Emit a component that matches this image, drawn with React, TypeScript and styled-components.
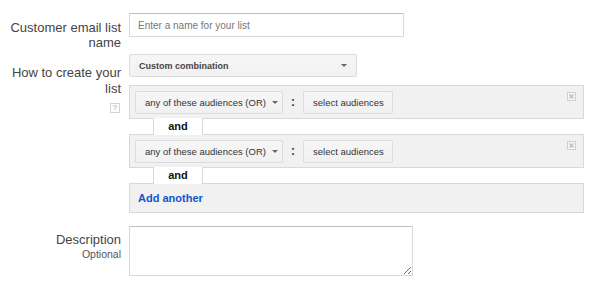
import React from "react";
import styled, { createGlobalStyle } from "styled-components";

const GlobalStyle = createGlobalStyle`
  body {
    margin: 0;
    background: #fff;
    font-family: Arial, "Liberation Sans", sans-serif;
  }
`;

const Page = styled.div`
  width: 600px;
  padding-top: 13px;
`;

const FormRow = styled.div<{ $gap?: number }>`
  display: grid;
  grid-template-columns: 121px 455px;
  column-gap: 8px;
  align-items: start;
  margin-top: ${(p) => p.$gap || 0}px;
`;

const Label = styled.div<{ $pad: number; $lh?: number }>`
  display: flex;
  flex-direction: column;
  align-items: flex-end;
  text-align: right;
  padding-top: ${(p) => p.$pad}px;
  font-size: 13px;
  line-height: ${(p) => p.$lh || 15}px;
  color: #444;
`;

const SubLabel = styled.div`
  margin-top: 1px;
  font-size: 10.5px;
  line-height: 13px;
  color: #555;
`;

const HelpIcon = styled.span`
  display: flex;
  align-items: center;
  justify-content: center;
  width: 8px;
  height: 8px;
  margin-top: 6px;
  margin-right: 1px;
  border: 1px solid #d4d4d4;
  font-size: 7px;
  line-height: 8px;
  color: #999;
`;

const Field = styled.div`
  display: flex;
  flex-direction: column;
  align-items: flex-start;
`;

const TextInput = styled.input`
  box-sizing: border-box;
  width: 275px;
  height: 24px;
  padding: 0 8px;
  border: 1px solid #d9d9d9;
  border-top-color: #c0c0c0;
  border-radius: 1px;
  font-family: Arial, "Liberation Sans", sans-serif;
  font-size: 10px;
  color: #333;
  outline: none;
  &::placeholder {
    color: #777;
  }
`;

const Button = styled.div<{ $w: number; $bold?: boolean }>`
  box-sizing: border-box;
  display: flex;
  align-items: center;
  justify-content: space-between;
  gap: 6px;
  width: ${(p) => p.$w}px;
  height: 23px;
  padding: 0 9px 0 9px;
  border: 1px solid #dcdcdc;
  border-radius: 2px;
  background: linear-gradient(#f6f6f6, #f1f1f1);
  font-size: ${(p) => (p.$bold ? 9 : 9.5)}px;
  font-weight: ${(p) => (p.$bold ? "bold" : "normal")};
  color: ${(p) => (p.$bold ? "#444" : "#333")};
  white-space: nowrap;
`;

const Caret = styled.span`
  width: 0;
  height: 0;
  border-left: 3px solid transparent;
  border-right: 3px solid transparent;
  border-top: 3px solid #666;
`;

const Groups = styled.div`
  width: 455px;
  margin-top: 8px;
  display: flex;
  flex-direction: column;
`;

const GroupBox = styled.div`
  position: relative;
  box-sizing: border-box;
  display: flex;
  align-items: center;
  height: 34px;
  padding: 0 5px;
  border: 1px solid #d9d9d9;
  background: #f1f1f1;
`;

const Colon = styled.span`
  width: 20px;
  text-align: center;
  font-size: 12px;
  font-weight: bold;
  color: #333;
`;

const CloseBox = styled.span`
  position: absolute;
  top: 6px;
  right: 7px;
  display: flex;
`;

const AndTab = styled.div`
  position: relative;
  z-index: 1;
  box-sizing: border-box;
  width: 50px;
  height: 17px;
  margin: -1px 0 -1px 24px;
  padding-top: 1px;
  border-left: 1px solid #d9d9d9;
  border-right: 1px solid #d9d9d9;
  background: #fff;
  text-align: center;
  font-size: 11px;
  line-height: 15px;
  font-weight: bold;
  color: #111;
`;

const AddBox = styled.div`
  box-sizing: border-box;
  display: flex;
  align-items: center;
  height: 30px;
  padding: 0 8px;
  border: 1px solid #d9d9d9;
  background: #f1f1f1;
`;

const AddLink = styled.a`
  font-size: 11px;
  font-weight: bold;
  color: #1155cc;
  text-decoration: none;
`;

const TextArea = styled.textarea`
  box-sizing: border-box;
  width: 284px;
  height: 50px;
  border: 1px solid #d9d9d9;
  border-top-color: #c0c0c0;
  border-radius: 1px;
  outline: none;
  resize: both;
`;

const CloseIcon = () => (
  <svg width="9" height="9" viewBox="0 0 9 9">
    <rect x="0.5" y="0.5" width="8" height="8" fill="#f6f6f6" stroke="#d0d0d0" />
    <path d="M2.5 2.5 L6.5 6.5 M6.5 2.5 L2.5 6.5" stroke="#bdbdbd" strokeWidth="1.2" />
  </svg>
);

const AudienceGroup = () => (
  <GroupBox>
    <Button $w={148}>
      any of these audiences (OR)
      <Caret />
    </Button>
    <Colon>:</Colon>
    <Button $w={90}>select audiences</Button>
    <CloseBox>
      <CloseIcon />
    </CloseBox>
  </GroupBox>
);

export default function App() {
  return (
    <>
      <GlobalStyle />
      <Page>
        <FormRow>
          <Label $pad={7}>
            Customer email list
            <br />
            name
          </Label>
          <Field>
            <TextInput placeholder="Enter a name for your list" />
          </Field>
        </FormRow>

        <FormRow $gap={4}>
          <Label $pad={11} $lh={16}>
            How to create your
            <br />
            list
            <HelpIcon>?</HelpIcon>
          </Label>
          <Field>
            <Button $w={228} $bold>
              Custom combination
              <Caret />
            </Button>
            <Groups>
              <AudienceGroup />
              <AndTab>and</AndTab>
              <AudienceGroup />
              <AndTab>and</AndTab>
              <AddBox>
                <AddLink href="#">Add another</AddLink>
              </AddBox>
            </Groups>
          </Field>
        </FormRow>

        <FormRow $gap={13}>
          <Label $pad={6}>
            Description
            <SubLabel>Optional</SubLabel>
          </Label>
          <Field>
            <TextArea />
          </Field>
        </FormRow>
      </Page>
    </>
  );
}
